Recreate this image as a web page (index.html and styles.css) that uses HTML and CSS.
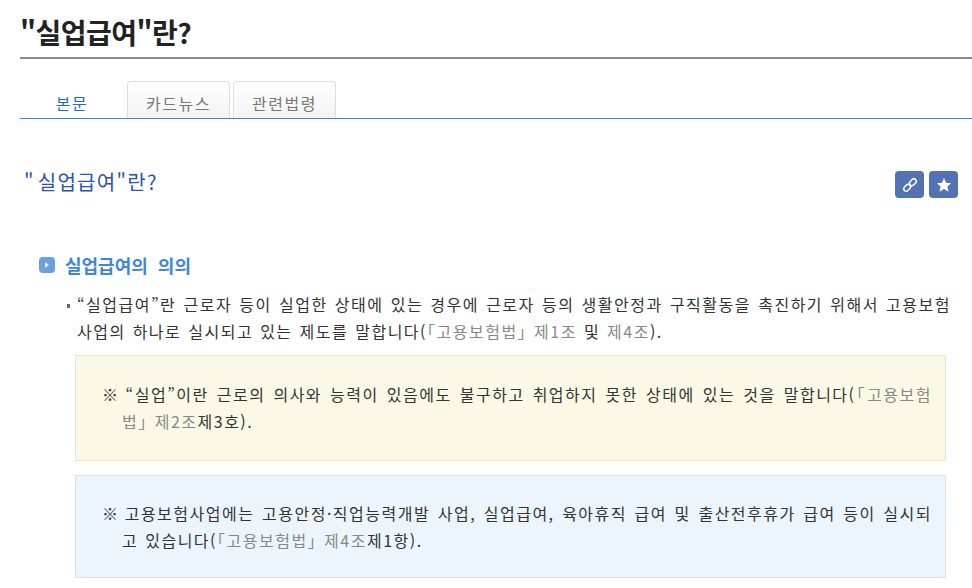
FILE: index.html
```html
<!DOCTYPE html>
<html lang="ko">
<head>
<meta charset="UTF-8">
<title>실업급여란?</title>
<link rel="stylesheet" href="styles.css">
</head>
<body>
   <div class="page">
      <h1 class="page-title">"실업급여"란?</h1>
      <ul class="tabs">
         <li class="tab active">본문</li>
         <li class="tab">카드뉴스</li>
         <li class="tab">관련법령</li>
      </ul>
      <div class="article-head">
         <h2 class="article-title">" 실업급여"란?</h2>
         <div class="tools">
            <span class="tool-btn">
               <svg width="18" height="18" viewBox="0 0 20 20" fill="none" stroke="#fff" stroke-width="1.7">
                  <rect x="9" y="4.2" width="8.4" height="5.4" rx="2.7" transform="rotate(-45 13.2 6.9)"/>
                  <rect x="2.6" y="10.4" width="8.4" height="5.4" rx="2.7" transform="rotate(-45 6.8 13.1)"/>
               </svg>
            </span>
            <span class="tool-btn">
               <svg width="18" height="18" viewBox="0 0 20 20" fill="#fff">
                  <path d="M10 2.2l2.4 5.2 5.6.6-4.2 3.8 1.2 5.6-5-2.9-5 2.9 1.2-5.6L2 8l5.6-.6z"/>
               </svg>
            </span>
         </div>
      </div>
      <h3 class="section-title">
         <span class="section-icon"></span>
         실업급여의 의의
      </h3>
      <p class="lead">“실업급여”란 근로자 등이 실업한 상태에 있는 경우에 근로자 등의 생활안정과 구직활동을 촉진하기 위해서 고용보험사업의 하나로 실시되고 있는 제도를 말합니다(<span class="law">「고용보험법」 제1조</span> 및 <span class="law">제4조</span>).</p>
      <div class="note yellow">
         <p><span class="mark">※</span> “실업”이란 근로의 의사와 능력이 있음에도 불구하고 취업하지 못한 상태에 있는 것을 말합니다(<span class="law">「고용보험법」 제2조</span>제3호).</p>
      </div>
      <div class="note blue">
         <p><span class="mark">※</span> 고용보험사업에는 고용안정·직업능력개발 사업, 실업급여, 육아휴직 급여 및 출산전후휴가 급여 등이 실시되고 있습니다(<span class="law">「고용보험법」 제4조</span>제1항).</p>
      </div>
   </div>
</body>
</html>
```

FILE: styles.css
```css
html, body {
  height: 100%;
  overflow: hidden;
}
body {
  font-family: "Noto Sans CJK KR", "Noto Sans", sans-serif;
  margin: 0;
  padding: 0;
  background-color: #fff;
  color: #333;
}
.page {
  padding: 0 0 0 20px;
  width: 952px;
}
.page-title {
  margin: 0;
  height: 57px;
  border-bottom: 2px solid #8a8a8a;
  font-size: 28px;
  line-height: 64px;
  font-weight: 700;
  letter-spacing: -0.55px;
  color: #222;
}
.tabs {
  display: flex;
  list-style: none;
  margin: 22px 0 0;
  padding: 0;
  height: 37px;
  gap: 3px;
  border-bottom: 1px solid #3d86dc;
}
.tab {
  box-sizing: border-box;
  width: 103px;
  height: 37px;
  border: 1px solid #ddd;
  border-bottom: none;
  border-radius: 4px 4px 0 0;
  background: linear-gradient(#fff, #f3f3f3);
  font-size: 16px;
  line-height: 42px;
  text-align: center;
  color: #777;
  letter-spacing: 1.5px;
}
.tab.active {
  width: 104px;
  border-color: transparent;
  background: none;
  color: #1a6cd0;
}
.article-head {
  display: flex;
  justify-content: space-between;
  padding: 38px 14px 0 4px;
  height: 53px;
}
.article-title {
  margin: -1px 0 0;
  font-size: 20px;
  font-weight: 400;
  line-height: 52px;
  color: #2a52b4;
  letter-spacing: 1.3px;
  word-spacing: -4px;
}
.tools {
  display: flex;
  gap: 5px;
  margin-top: 14px;
}
.tool-btn {
  display: flex;
  align-items: center;
  justify-content: center;
  width: 29px;
  height: 27px;
  border-radius: 4px;
  background-color: #5272b4;
}
.section-title {
  display: flex;
  align-items: center;
  gap: 10px;
  margin: 26px 0 0 19px;
  padding-top: 8px;
  height: 42px;
  font-size: 18px;
  font-weight: 700;
  word-spacing: 5px;
  color: #3d86dc;
}
.section-icon {
  position: relative;
  width: 16px;
  height: 16px;
  border-radius: 4px;
  background-color: #6a9fe0;
}
.section-icon::after {
  content: "";
  position: absolute;
  left: 6px;
  top: 5px;
  border-left: 4px solid #e8f1fb;
  border-top: 3px solid transparent;
  border-bottom: 3px solid transparent;
}
p {
  margin: 0;
}
.lead {
  position: relative;
  margin: 5px 21px 0 57px;
  font-size: 16px;
  line-height: 27px;
  letter-spacing: 1.5px;
  word-spacing: 1px;
  text-align: justify;
  color: #333;
}
.lead::before {
  content: "";
  position: absolute;
  left: -10px;
  top: 13px;
  width: 3px;
  height: 4px;
  background-color: #666;
}
.law {
  color: #888;
  word-spacing: -7px;
}
.note {
  margin: 0 26px 0 55px;
  border: 1px solid;
  padding: 25px 13px 0 46px;
  box-sizing: border-box;
  font-size: 16px;
  line-height: 27px;
  letter-spacing: 1.5px;
  word-spacing: 1px;
  text-align: justify;
}
.note p {
  text-indent: -20px;
}
.mark {
  margin-right: -3px;
}
.yellow {
  margin-top: 10px;
  height: 106px;
  background-color: #fbf9e5;
  border-color: #e8e6c0;
}
.blue {
  margin-top: 14px;
  padding-top: 24px;
  height: 103px;
  background-color: #edf5fc;
  border-color: #d5e1ef;
}
```
